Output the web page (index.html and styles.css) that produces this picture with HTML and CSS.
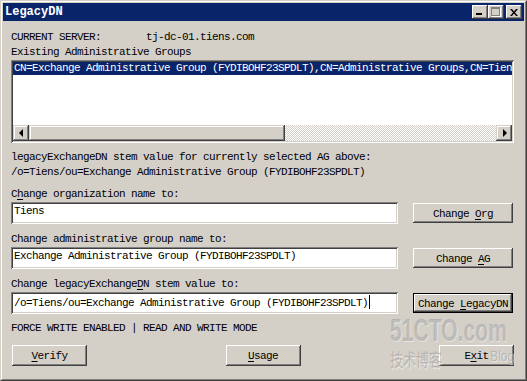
FILE: index.html
```html
<!DOCTYPE html>
<html>
<head>
<meta charset="utf-8">
<title>LegacyDN</title>
<link rel="stylesheet" href="styles.css">
</head>
<body>
<div class="window">
  <div class="frame">
    <div class="titlebar">
      <span class="title">LegacyDN</span>
      <div class="caption-buttons">
        <span class="cbtn min"><span class="min-glyph"></span></span>
        <span class="cbtn max"><span class="max-glyph"></span></span>
        <span class="cbtn close">
          <svg width="8" height="7" viewBox="0 0 8 7"><path d="M0 0h2l2 2.5L6 0h2L5 3.5 8 7H6L4 4.5 2 7H0l3-3.5z" fill="#000"/></svg>
        </span>
      </div>
    </div>
    <div class="client">
      <div class="line"><span class="server-label">CURRENT SERVER:</span>tj-dc-01.tiens.com</div>
      <div class="line gap3">Existing Administrative Groups</div>
      <div class="listbox">
        <div class="items">
          <div class="item sel">CN=Exchange Administrative Group (FYDIBOHF23SPDLT),CN=Administrative Groups,CN=Tien</div>
        </div>
        <div class="hscroll">
          <span class="sbtn"><span class="arrow-left"></span></span>
          <span class="thumb"></span>
          <span class="track"></span>
          <span class="sbtn"><span class="arrow-right"></span></span>
        </div>
      </div>
      <div class="line info">legacyExchangeDN stem value for currently selected AG above:</div>
      <div class="line gap3">/o=Tiens/ou=Exchange Administrative Group (FYDIBOHF23SPDLT)</div>

      <div class="line label first">C<span class="u">h</span>ange organization name to:</div>
      <div class="field-row">
        <div class="textbox">Tiens</div>
        <div class="btn">Change <span class="u">O</span>rg</div>
      </div>

      <div class="line label">Change administrative group name to:</div>
      <div class="field-row">
        <div class="textbox">Exchange Administrative Group (FYDIBOHF23SPDLT)</div>
        <div class="btn">Change <span class="u">A</span>G</div>
      </div>

      <div class="line label">Change legacyExchange<span class="u">D</span>N stem value to:</div>
      <div class="field-row">
        <div class="textbox">/o=Tiens/ou=Exchange Administrative Group (FYDIBOHF23SPDLT)<span class="caret"></span></div>
        <div class="btn default">Change <span class="u">L</span>egacyDN</div>
      </div>

      <div class="line status">FORCE WRITE ENABLED | READ AND WRITE MODE</div>

      <div class="bottom-row">
        <div class="btn wide"><span class="u">V</span>erify</div>
        <div class="btn wide"><span class="u">U</span>sage</div>
        <div class="btn wide">E<span class="u">x</span>it</div>
      </div>
    </div>
  </div>
  <div class="watermark">
    <div class="wm-big">51CTO.com</div>
    <div class="wm-small"><span class="wm-cn">技术博客</span><span class="wm-blog">Blog</span></div>
  </div>
</div>
</body>
</html>
```

FILE: styles.css
```css
* { box-sizing: border-box; }
html, body { margin: 0; padding: 0; }
body {
  width: 527px;
  height: 381px;
  overflow: hidden;
  background: #d4d0c8;
  font-family: "Liberation Mono", "DejaVu Sans Mono", monospace;
  font-size: 11px;
  letter-spacing: -0.6px;
  line-height: 12px;
  color: #000;
}
.window {
  position: relative;
  width: 527px;
  height: 381px;
  border: 1px solid;
  border-color: #d4d0c8 #404040 #404040 #d4d0c8;
  background: #d4d0c8;
}
.frame {
  height: 100%;
  border: 1px solid;
  border-color: #ffffff #808080 #808080 #ffffff;
  padding: 1px;
  display: flex;
  flex-direction: column;
}
.titlebar {
  height: 18px;
  flex: none;
  background: #0a246a;
  display: flex;
  align-items: center;
  justify-content: space-between;
  padding: 0 2px 0 2px;
}
.title {
  color: #fff;
  font-weight: bold;
  font-size: 12px;
  letter-spacing: 0;
}
.caption-buttons { display: flex; }
.cbtn {
  position: relative;
  width: 16px;
  height: 14px;
  background: #d4d0c8;
  box-shadow: inset -1px -1px #404040, inset 1px 1px #ffffff, inset -2px -2px #808080, inset 2px 2px #d4d0c8;
  display: flex;
  align-items: center;
  justify-content: center;
}
.cbtn.close { margin-left: 2px; }
.min-glyph {
  position: absolute;
  left: 4px;
  top: 8px;
  width: 6px;
  height: 2px;
  background: #000;
}
.max-glyph {
  position: absolute;
  left: 3px;
  top: 2px;
  width: 9px;
  height: 9px;
  border: 1px solid #808080;
  border-top-width: 2px;
  box-shadow: 1px 1px 0 #ffffff;
}
.client {
  flex: 1;
  display: flex;
  flex-direction: column;
  padding: 10px 10px 0 8px;
}
.line {
  height: 12px;
  white-space: pre;
  flex: none;
}
.gap3 { margin-top: 3px; }
.server-label { display: inline-block; width: 135px; }
.listbox {
  margin-top: 2px;
  height: 83px;
  flex: none;
  padding: 2px;
  background: #fff;
  box-shadow: inset 1px 1px #808080, inset -1px -1px #ffffff, inset 2px 2px #404040, inset -2px -2px #d4d0c8;
  display: flex;
  flex-direction: column;
}
.items {
  flex: 1;
  overflow: hidden;
  background: #fff;
}
.item {
  height: 13px;
  padding-left: 1px;
  white-space: pre;
  overflow: hidden;
}
.item.sel { background: #0a246a; color: #fff; }
.hscroll {
  height: 16px;
  flex: none;
  display: flex;
}
.sbtn {
  width: 16px;
  height: 16px;
  flex: none;
  background: #d4d0c8;
  box-shadow: inset -1px -1px #404040, inset 1px 1px #d4d0c8, inset -2px -2px #808080, inset 2px 2px #ffffff;
  display: flex;
  align-items: center;
  justify-content: center;
}
.arrow-left {
  width: 0; height: 0;
  border-top: 4px solid transparent;
  border-bottom: 4px solid transparent;
  border-right: 4px solid #000;
  margin-left: -1px;
}
.arrow-right {
  width: 0; height: 0;
  border-top: 4px solid transparent;
  border-bottom: 4px solid transparent;
  border-left: 4px solid #000;
  margin-left: 1px;
}
.thumb {
  width: 256px;
  flex: none;
  background: #d4d0c8;
  box-shadow: inset -1px -1px #404040, inset 1px 1px #d4d0c8, inset -2px -2px #808080, inset 2px 2px #ffffff;
}
.track {
  flex: 1;
  background: repeating-conic-gradient(#d4d0c8 0 25%, #ffffff 0 50%) 0 0 / 2px 2px;
}
.info { margin-top: 8px; }
.label { margin-top: 9px; }
.label.first { margin-top: 10px; }
.field-row {
  margin-top: 2px;
  height: 22px;
  flex: none;
  display: flex;
  gap: 15px;
  align-items: flex-start;
}
.textbox {
  width: 387px;
  height: 22px;
  flex: none;
  background: #fff;
  padding: 3px 3px 0 3px;
  white-space: pre;
  overflow: hidden;
  box-shadow: inset 1px 1px #808080, inset -1px -1px #ffffff, inset 2px 2px #404040, inset -2px -2px #d4d0c8;
}
.caret {
  display: inline-block;
  width: 1px;
  height: 14px;
  background: #000;
  vertical-align: -3px;
  margin-left: 1px;
}
.btn {
  width: 100px;
  height: 20px;
  margin-top: 1px;
  flex: none;
  background: #d4d0c8;
  box-shadow: inset -1px -1px #404040, inset 1px 1px #ffffff, inset -2px -2px #808080, inset 2px 2px #d4d0c8;
  display: flex;
  align-items: center;
  justify-content: center;
  padding-top: 1px;
  white-space: pre;
}
.btn.default {
  border: 1px solid #000;
}
.u { text-decoration: underline; text-underline-offset: 2px; }
.status { margin-top: 8px; }
.bottom-row {
  margin-top: 11px;
  display: flex;
  justify-content: space-between;
  padding-left: 1px;
}
.btn.wide {
  width: 75px;
  height: 21px;
  margin-top: 0;
}
.watermark {
  position: absolute;
  left: 389px;
  top: 314px;
  width: 124px;
  pointer-events: none;
  color: rgba(150, 150, 150, 0.5);
  text-shadow: 1px 1px 0 rgba(255, 255, 255, 0.45);
  letter-spacing: 0;
}
.wm-big {
  font-family: "Liberation Sans", Arial, sans-serif;
  font-weight: bold;
  font-size: 32px;
  line-height: 30px;
  transform: scaleX(0.66);
  transform-origin: left top;
  white-space: nowrap;
}
.wm-small {
  display: flex;
  align-items: flex-start;
  justify-content: space-between;
  margin-top: 3px;
  white-space: nowrap;
}
.wm-cn {
  font-family: "Noto Sans CJK SC", sans-serif;
  font-size: 13px;
  line-height: 18px;
  transform: scaleY(1.3);
  transform-origin: left top;
}
.wm-blog {
  font-family: "Liberation Sans", Arial, sans-serif;
  font-size: 14px;
  line-height: 16px;
  transform: scaleX(0.85);
  transform-origin: right top;
}
```
